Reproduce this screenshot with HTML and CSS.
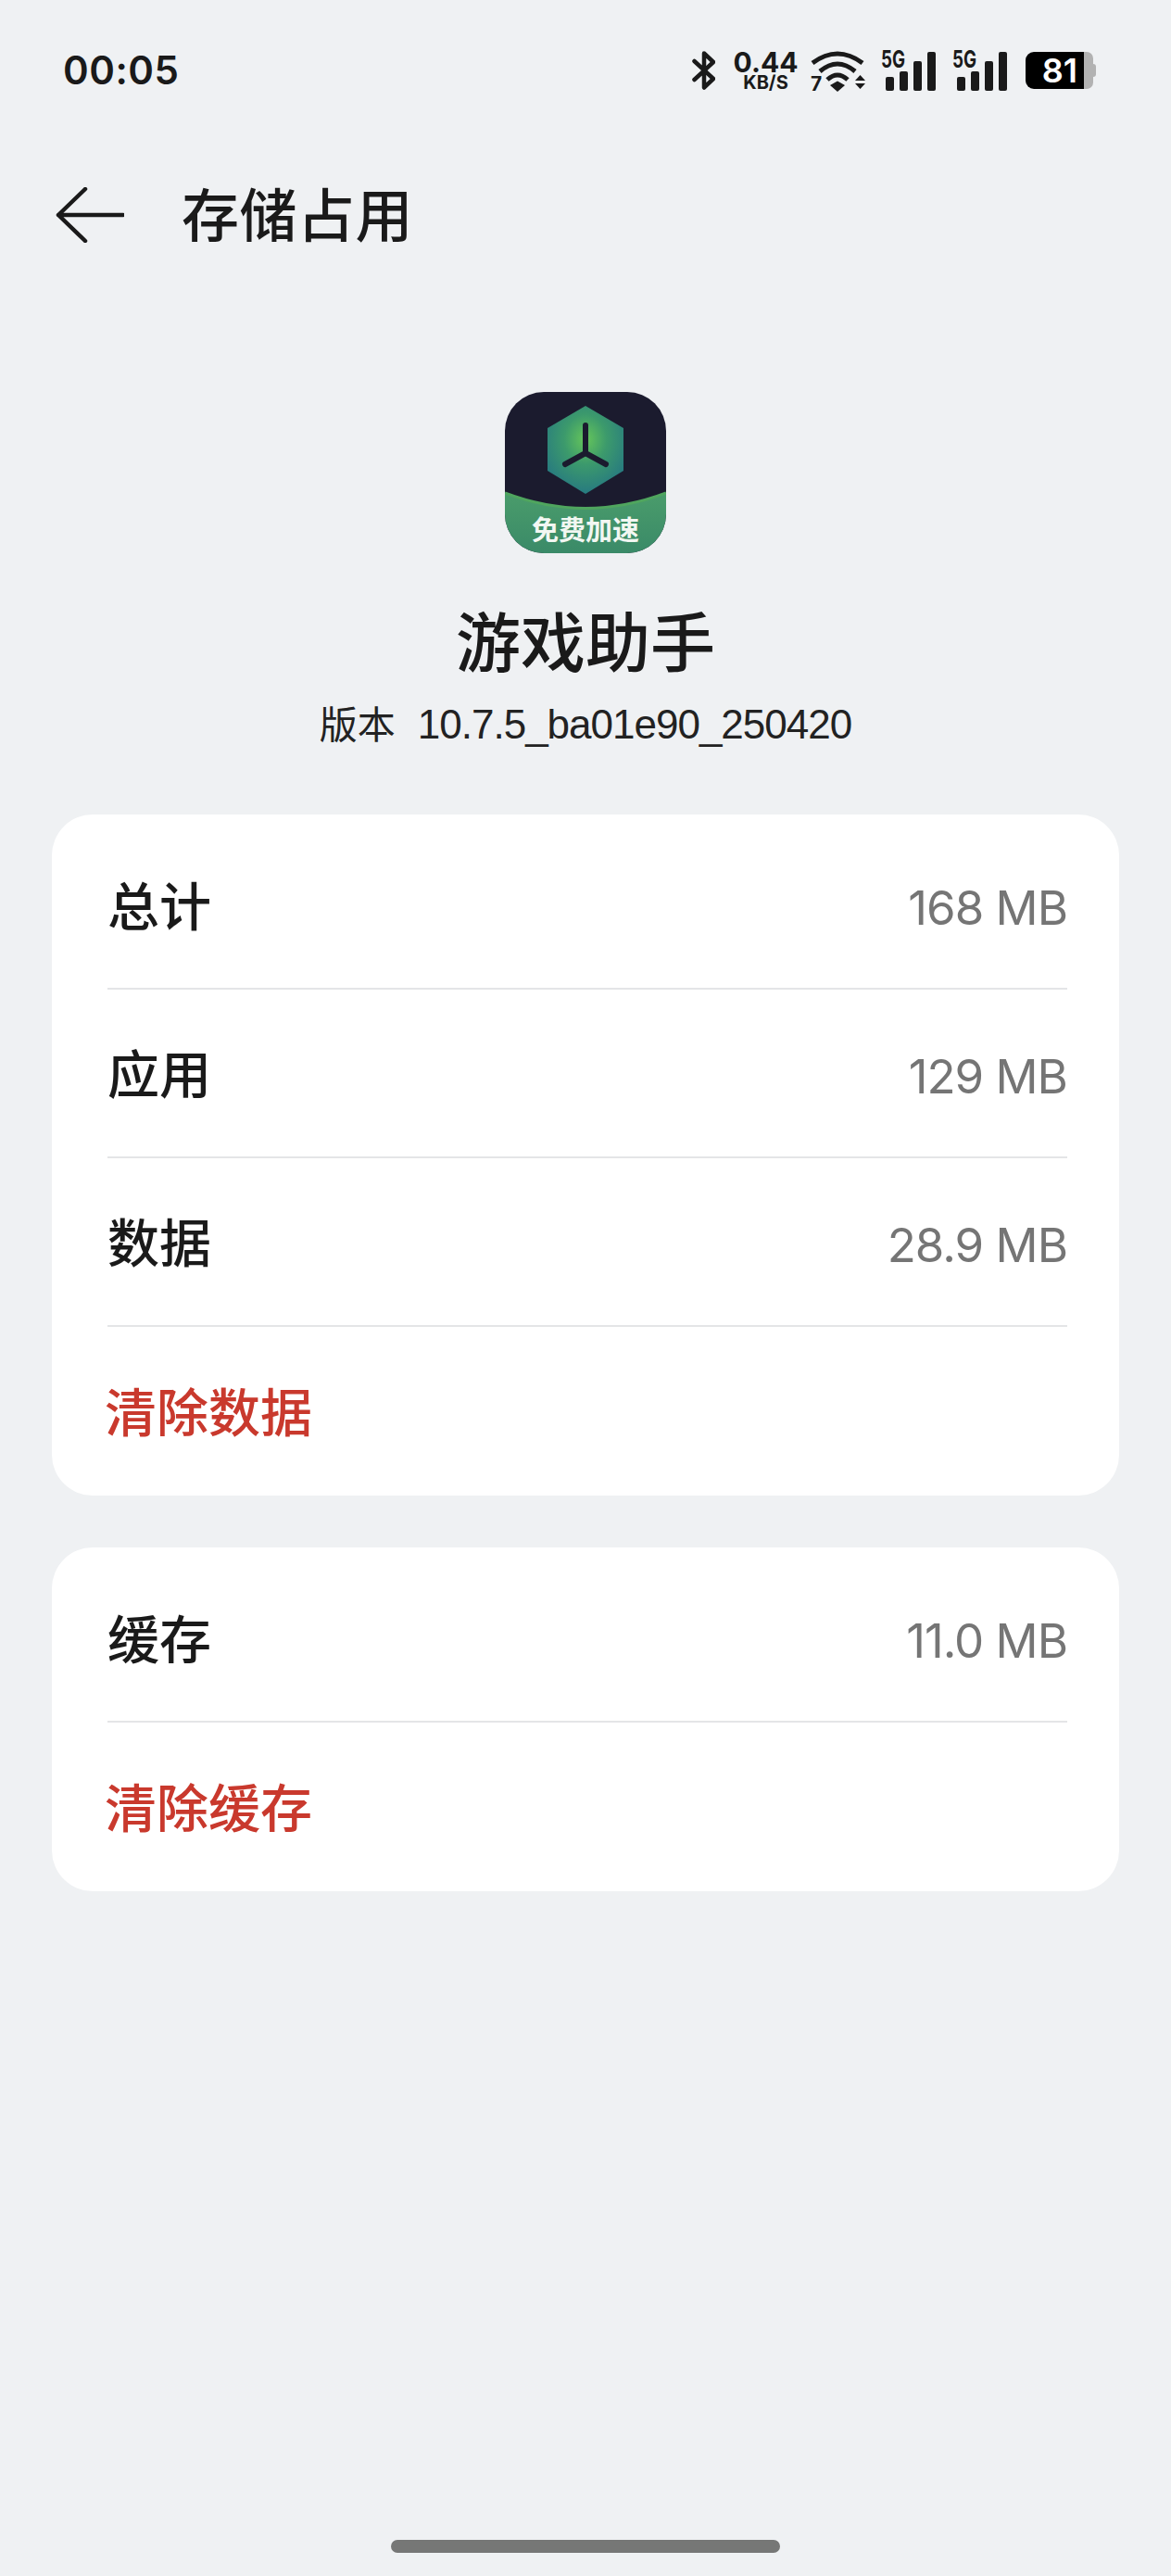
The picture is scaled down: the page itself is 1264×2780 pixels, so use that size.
FILE: index.html
```html
<!DOCTYPE html>
<html lang="zh-CN">
<head>
  <meta charset="UTF-8">
  <meta name="viewport" content="width=device-width, initial-scale=1.0">
  <title>存储占用</title>
  <link rel="stylesheet" href="styles.css">
</head>
<body>
  <div class="status-bar">
    <span class="clock">00:05</span>
    <div class="status-icons">
      <svg class="icon-bt" width="25" height="42" viewBox="0 0 25 42">
        <path d="M2.500 11 L23 30 L13 39.500 V2.500 L23 12 L2.500 31" fill="none" stroke="#1a1a1a" stroke-width="4.500" stroke-linejoin="round" stroke-linecap="round"/>
      </svg>
      <div class="net-speed">
        <span class="net-value">0.44</span>
        <span class="net-unit">KB/S</span>
      </div>
      <svg class="icon-wifi" width="59" height="45" viewBox="0 0 59 45">
        <path d="M2 14 Q29 -6 56 14" fill="none" stroke="#1a1a1a" stroke-width="5"/>
        <path d="M10 23 Q29 7 48 23" fill="none" stroke="#1a1a1a" stroke-width="5"/>
        <path d="M18 32 Q29 22 40 32" fill="none" stroke="#1a1a1a" stroke-width="5"/>
        <path d="M21 38 L29 33.500 L37 38 L29 45 Z" fill="#1a1a1a"/>
        <text class="wifi-gen" x="0" y="44">7</text>
        <path d="M48 33 L53.500 27 L59 33 Z M48 36 H59 L53.500 42 Z" fill="#1a1a1a"/>
      </svg>
      <div class="signal">
        <span class="signal-label">5G</span>
        <div class="bars">
          <span class="bar bar-1"></span>
          <span class="bar bar-2"></span>
          <span class="bar bar-3"></span>
          <span class="bar bar-4"></span>
        </div>
      </div>
      <div class="signal">
        <span class="signal-label">5G</span>
        <div class="bars">
          <span class="bar bar-1"></span>
          <span class="bar bar-2"></span>
          <span class="bar bar-3"></span>
          <span class="bar bar-4"></span>
        </div>
      </div>
      <div class="battery">
        <div class="battery-level">81</div>
        <div class="battery-rest"></div>
        <div class="battery-tip"></div>
      </div>
    </div>
  </div>

  <div class="title-bar">
    <svg class="back" width="74" height="60" viewBox="0 0 74 60">
      <path d="M32 2 L3 30 L32 58 M3 30 H73" fill="none" stroke="#1a1a1a" stroke-width="4.500" stroke-linecap="round" stroke-linejoin="round"/>
    </svg>
    <h1>存储占用</h1>
  </div>

  <div class="app-info">
    <svg class="app-icon" width="174" height="174" viewBox="0 0 174 174">
      <defs>
        <radialGradient id="hexGlow" cx="50%" cy="38%" r="62%">
          <stop offset="0" stop-color="#66c65a"/>
          <stop offset="0.45" stop-color="#3c9a6c"/>
          <stop offset="1" stop-color="#277a80"/>
        </radialGradient>
        <linearGradient id="bandFill" x1="0" y1="0" x2="0" y2="1">
          <stop offset="0" stop-color="#4a9c6b"/>
          <stop offset="1" stop-color="#3a8a68"/>
        </linearGradient>
        <clipPath id="squircle">
          <rect width="174" height="174" rx="42"/>
        </clipPath>
      </defs>
      <g clip-path="url(#squircle)">
        <rect width="174" height="174" fill="#1b1b2e"/>
        <path d="M0 109 Q87 142 174 109 V174 H0 Z" fill="url(#bandFill)"/>
        <path d="M0 109 Q87 142 174 109" fill="none" stroke="#4fa55e" stroke-width="3"/>
      </g>
      <path d="M87 15 L128 39 V85 L87 110 L46 85 V39 Z" fill="url(#hexGlow)"/>
      <path d="M87 36 V66 M87 66 L65 78 M87 66 L109 78" fill="none" stroke="#1b1b2e" stroke-width="6" stroke-linecap="round"/>
      <text class="app-icon-label" x="87" y="160" text-anchor="middle">免费加速</text>
    </svg>
    <div class="app-name">游戏助手</div>
    <div class="app-version"><span class="version-label">版本</span>10.7.5_ba01e90_250420</div>
  </div>

  <div class="card card-first">
    <div class="row">
      <span class="row-label">总计</span>
      <span class="row-value">168 MB</span>
    </div>
    <div class="row">
      <span class="row-label">应用</span>
      <span class="row-value">129 MB</span>
    </div>
    <div class="row">
      <span class="row-label">数据</span>
      <span class="row-value">28.9 MB</span>
    </div>
    <div class="row row-action">清除数据</div>
  </div>

  <div class="card">
    <div class="row">
      <span class="row-label">缓存</span>
      <span class="row-value">11.0 MB</span>
    </div>
    <div class="row row-action">清除缓存</div>
  </div>

  <div class="home-bar"></div>
</body>
</html>
```

FILE: styles.css
```css
* {
  margin: 0;
  padding: 0;
  box-sizing: border-box;
}
body {
  font-family: 'Liberation Sans', 'Noto Sans CJK SC', sans-serif;
  background-color: #eff1f3;
  color: #1a1a1a;
  width: 1264px;
  height: 2780px;
  position: relative;
  overflow: hidden;
}
.status-bar {
  height: 112px;
  padding: 40px 81px 0 68px;
  display: flex;
  justify-content: space-between;
  align-items: center;
}
.clock {
  font-family: 'Inter', sans-serif;
  font-size: 42px;
  font-weight: 600;
  letter-spacing: 0.5px;
  margin-bottom: 2px;
}
.status-icons {
  display: flex;
  align-items: center;
}
.icon-bt {
  margin-right: 20px;
}
.net-speed {
  display: flex;
  flex-direction: column;
  align-items: center;
  width: 69px;
  font-family: 'Inter', sans-serif;
  font-weight: 700;
  margin-right: 14px;
}
.net-value {
  font-size: 30px;
  height: 26px;
  line-height: 26px;
}
.net-unit {
  font-size: 20px;
  height: 18px;
  line-height: 18px;
}
.icon-wifi {
  margin-right: 17px;
  overflow: visible;
}
.wifi-gen {
  font-family: 'Inter', sans-serif;
  font-size: 21px;
  font-weight: 700;
  fill: #1a1a1a;
}
.signal {
  position: relative;
  width: 59px;
  height: 44px;
  margin-right: 18px;
}
.signal-label {
  position: absolute;
  left: 0;
  top: 0;
  font-family: 'Inter', sans-serif;
  font-size: 26px;
  line-height: 19px;
  font-weight: 700;
  transform: scaleX(0.72);
  transform-origin: left center;
}
.bars {
  position: absolute;
  right: 0;
  bottom: 0;
  display: flex;
  align-items: flex-end;
  gap: 6px;
}
.bar {
  width: 9px;
  background: #1a1a1a;
  border-radius: 2px;
}
.bar-1 { height: 15px; }
.bar-2 { height: 21px; }
.bar-3 { height: 32px; }
.bar-4 { height: 42px; }
.battery {
  display: flex;
  align-items: center;
  margin-left: 2px;
}
.battery-level {
  width: 63px;
  height: 40px;
  background: #000;
  color: #fff;
  border-radius: 9px 0 0 9px;
  font-family: 'Inter', sans-serif;
  font-size: 36px;
  font-weight: 600;
  text-align: right;
  line-height: 40px;
  padding-right: 7px;
}
.battery-rest {
  width: 10px;
  height: 40px;
  background: #b2b2b2;
  border-radius: 0 7px 7px 0;
}
.battery-tip {
  width: 3px;
  height: 14px;
  background: #b2b2b2;
  border-radius: 0 3px 3px 0;
}
.title-bar {
  height: 120px;
  margin-top: 60px;
  padding-left: 60px;
  display: flex;
  align-items: center;
}
.back {
  margin-right: 62px;
}
h1 {
  font-family: 'Noto Sans CJK SC', sans-serif;
  font-size: 62px;
  font-weight: 500;
  letter-spacing: 0.5px;
  margin-bottom: 6px;
}
.app-info {
  margin-top: 131px;
  display: flex;
  flex-direction: column;
  align-items: center;
}
.app-icon {
  display: block;
}
.app-icon-label {
  font-family: 'Noto Sans CJK SC', sans-serif;
  font-size: 29px;
  font-weight: 700;
  fill: #f2f7f2;
}
.app-name {
  font-family: 'Noto Sans CJK SC', sans-serif;
  font-size: 70px;
  font-weight: 500;
  margin-top: 50px;
  line-height: 86px;
}
.app-version {
  font-size: 44px;
  line-height: 56px;
  margin-top: 21px;
  letter-spacing: -1px;
  color: #222;
}
.version-label {
  font-size: 41px;
  letter-spacing: 0;
  margin-right: 24px;
}
.card {
  margin: 0 56px;
  background: #fff;
  border-radius: 44px;
  padding: 0 56px 0 60px;
}
.card-first {
  margin-top: 68px;
  margin-bottom: 56px;
}
.row {
  height: 182px;
  display: flex;
  justify-content: space-between;
  align-items: center;
  border-bottom: 2px solid #e4e5e7;
  font-family: 'Noto Sans CJK SC', sans-serif;
}
.row:first-child {
  height: 189px;
  padding-top: 8px;
}
.row:last-child {
  border-bottom: none;
}
.row-label {
  font-size: 56px;
  font-weight: 500;
  line-height: 1;
  margin-top: -4px;
}
.row-value {
  font-family: 'Inter', sans-serif;
  font-size: 51px;
  color: #757575;
  letter-spacing: -1px;
  margin-top: 6px;
}
.row-action {
  font-size: 56px;
  font-weight: 500;
  color: #c9392d;
  margin-left: -3px;
  padding-bottom: 6px;
}
.home-bar {
  position: absolute;
  left: 422px;
  top: 2741px;
  width: 420px;
  height: 14px;
  border-radius: 7px;
  background: #767776;
}
```
